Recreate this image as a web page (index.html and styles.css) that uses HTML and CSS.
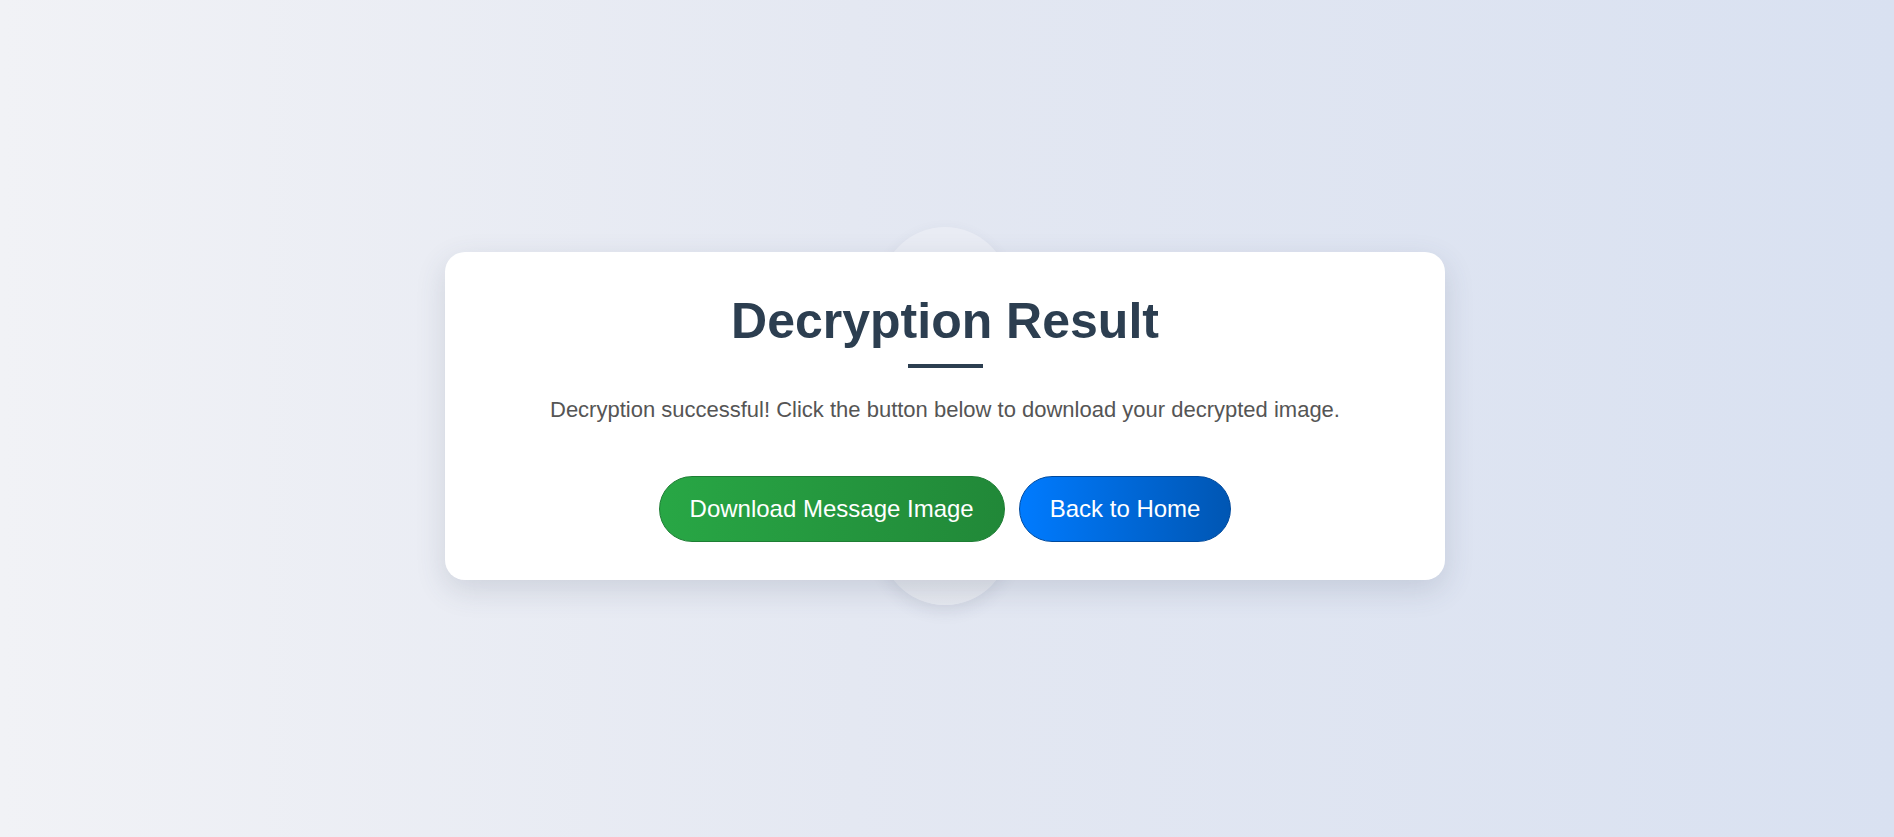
FILE: index.html
```html
<!DOCTYPE html>
<html lang="en">
<head>
<meta charset="utf-8">
<title>Decryption Result</title>
<link rel="stylesheet" href="styles.css">
</head>
<body>
<main class="page">
  <section class="card">
    <h1 class="title">Decryption Result</h1>
    <div class="rule"></div>
    <p class="message">Decryption successful! Click the button below to download your decrypted image.</p>
    <div class="actions">
      <a class="btn btn-green" href="#">Download Message Image</a>
      <a class="btn btn-blue" href="#">Back to Home</a>
    </div>
  </section>
</main>
</body>
</html>
```
FILE: styles.css
```css
html, body {
  margin: 0;
  padding: 0;
}

body {
  font-family: "Liberation Sans", Arial, sans-serif;
  background: linear-gradient(to right, #f1f2f6 0%, #e4e8f2 45%, #d9e1f1 100%);
  min-height: 100vh;
}

.page {
  min-height: 100vh;
  display: flex;
  align-items: center;
  justify-content: center;
  padding-right: 4px;
  box-sizing: border-box;
}

.card {
  position: relative;
  width: 1000px;
  box-sizing: border-box;
  background: #ffffff;
  border-radius: 20px;
  padding: 40px 40px 38px;
  text-align: center;
  box-shadow: 0 10px 30px rgba(60, 72, 100, 0.16);
  margin-top: -5px;
}

.card::before,
.card::after {
  content: "";
  position: absolute;
  left: 50%;
  width: 130px;
  height: 130px;
  margin-left: -65px;
  border-radius: 50%;
  z-index: -1;
}

.card::before {
  top: -25px;
  background: #e9ecf4;
  box-shadow: 0 4px 14px rgba(60, 72, 100, 0.08);
}

.card::after {
  bottom: -25px;
  background: linear-gradient(to bottom, #dcdfe6 0%, #e6e9f0 100%);
  box-shadow: 0 6px 16px rgba(60, 72, 100, 0.1);
}

.title {
  margin: 0;
  font-size: 50px;
  font-weight: 700;
  color: #2c3e50;
  line-height: normal;
}

.rule {
  width: 75px;
  height: 4px;
  background: #2c3e50;
  margin: 14px auto 29px;
}

.message {
  margin: 0 0 53px;
  font-size: 22px;
  color: #555555;
}

.actions {
  display: flex;
  justify-content: center;
  gap: 14px;
}

.btn {
  display: inline-block;
  padding: 18px 30px;
  border-radius: 40px;
  font-size: 24px;
  line-height: normal;
  color: #ffffff;
  text-decoration: none;
  border: 1px solid transparent;
}

.btn-green {
  background: linear-gradient(to right, #28a745, #218838);
  border-color: #1e7e34;
}

.btn-blue {
  background: linear-gradient(to right, #007bff, #0056b3);
  border-color: #004a9e;
}
```
